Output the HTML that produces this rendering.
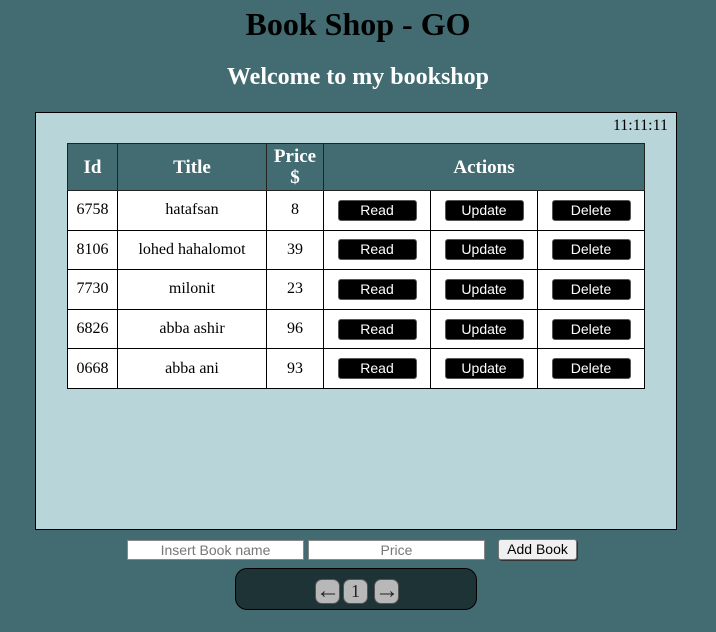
<!DOCTYPE html>
<html><head><style>
*{margin:0;padding:0;box-sizing:border-box}
body{width:716px;height:632px;background:#436c72;font-family:"Liberation Serif",serif;position:relative;overflow:hidden}
h1{position:absolute;top:6px;left:0;width:716px;text-align:center;font-size:32px;font-weight:bold;color:#000}
h2{position:absolute;top:64px;left:0;width:716px;text-align:center;font-size:24px;font-weight:bold;color:#fff}
.panel{position:absolute;left:35px;top:112px;width:642px;height:418px;background:#b8d6d9;border:1px solid #000}
.time{position:absolute;right:8px;top:4px;font-size:16px}
table{position:absolute;left:31px;top:30px;border-collapse:collapse;width:578px}
td,th{border:1px solid #000;text-align:center;font-size:16px}
th{background:#436c72;color:#fff;font-size:19px;height:47px;line-height:21px;border-color:#222}
td{background:#fff;height:39.6px}
.b{display:inline-block;width:79px;height:21px;background:#000;color:#fff;border:1px solid #555;border-radius:3px;font:14px "Liberation Sans",sans-serif;line-height:19px}
.in{position:absolute;top:540px;height:20px;width:177px;background:#fff;border:1px solid #888;color:#777;font:14px "Liberation Sans",sans-serif;text-align:center;line-height:18px}
.add{position:absolute;left:498px;top:539px;width:79px;height:21px;background:#f0f0f0;border:1px solid #777;border-radius:3px;font:14px "Liberation Sans",sans-serif;text-align:center;line-height:19px;box-shadow:1px 1px 0 #333}
.pg{position:absolute;left:235px;top:568px;width:242px;height:42px;background:#1e3336;border:1px solid #000;border-radius:12px}
.pb{position:absolute;top:10px;width:25px;height:25px;background:#b8b8b8;border:1px solid #555;border-radius:7px;text-align:center;line-height:23px;font-size:18px;color:#222}
.ar{font-size:24px;line-height:22px}
</style></head><body>
<h1>Book Shop - GO</h1>
<h2>Welcome to my bookshop</h2>
<div class="panel"><div class="time">11:11:11</div>
<table>
<tr><th style="width:50px">Id</th><th style="width:149px">Title</th><th style="width:57px">Price<br>$</th><th colspan="3">Actions</th></tr>
<tr><td>6758</td><td>hatafsan</td><td>8</td><td style="width:107px"><span class="b">Read</span></td><td style="width:107px"><span class="b">Update</span></td><td><span class="b">Delete</span></td></tr>
<tr><td>8106</td><td>lohed hahalomot</td><td>39</td><td><span class="b">Read</span></td><td><span class="b">Update</span></td><td><span class="b">Delete</span></td></tr>
<tr><td>7730</td><td>milonit</td><td>23</td><td><span class="b">Read</span></td><td><span class="b">Update</span></td><td><span class="b">Delete</span></td></tr>
<tr><td>6826</td><td>abba ashir</td><td>96</td><td><span class="b">Read</span></td><td><span class="b">Update</span></td><td><span class="b">Delete</span></td></tr>
<tr><td>0668</td><td>abba ani</td><td>93</td><td><span class="b">Read</span></td><td><span class="b">Update</span></td><td><span class="b">Delete</span></td></tr>
</table></div>
<div class="in" style="left:127px">Insert Book name</div>
<div class="in" style="left:308px">Price</div>
<div class="add">Add Book</div>
<div class="pg">
<div class="pb ar" style="left:79px">←</div>
<div class="pb" style="left:107px">1</div>
<div class="pb ar" style="left:138px">→</div>
</div>
</body></html>
